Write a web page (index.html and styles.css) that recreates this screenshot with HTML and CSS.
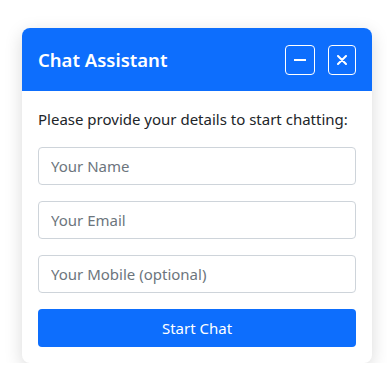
FILE: index.html
```html
<!DOCTYPE html>
<html lang="en">
<head>
    <meta charset="UTF-8">
    <meta name="viewport" content="width=device-width, initial-scale=1.0">
    <title>Chat Assistant</title>
    <link rel="stylesheet" href="styles.css">
</head>
<body>

    <div class="chat-widget">
        <div class="chat-header">
            <h2 class="chat-title">Chat Assistant</h2>
            <div class="header-buttons">
                <button class="header-btn minimize-btn" title="Minimize">
                    <svg width="12" height="12" viewBox="0 0 12 12"><path d="M0.5 6h11" stroke="#fff" stroke-width="2" stroke-linecap="round"/></svg>
                </button>
                <button class="header-btn close-btn" title="Close">
                    <svg width="10" height="10" viewBox="0 0 10 10"><path d="M1 1l8 8M9 1l-8 8" stroke="#fff" stroke-width="2" stroke-linecap="round"/></svg>
                </button>
            </div>
        </div>

        <!-- Details form shown before chat starts -->
        <div class="chat-body">
            <p class="intro">Please provide your details to start chatting:</p>
            <input type="text" class="form-input" placeholder="Your Name">
            <input type="email" class="form-input" placeholder="Your Email">
            <input type="tel" class="form-input" placeholder="Your Mobile (optional)">
            <button class="start-btn">Start Chat</button>
        </div>
    </div>

</body>
</html>
```

FILE: styles.css
```css
body {
    margin: 0;
    padding: 28px 15px 0 22px;
    font-family: "Noto Sans", "Open Sans", sans-serif;
    background-color: #fff;
}

.chat-widget {
    width: 350px;
    background-color: #fff;
    border-radius: 8px;
    box-shadow: 0 5px 18px rgba(0, 0, 0, 0.15);
    overflow: hidden;
}

.chat-header {
    display: flex;
    align-items: center;
    justify-content: space-between;
    height: 63px;
    padding: 0 16px;
    background-color: #0d6efd;
    color: #fff;
}
.chat-title {
    margin: 0;
    font-size: 18.5px;
    font-weight: 600;
}
.header-buttons {
    display: flex;
    gap: 13px;
}
.header-btn {
    display: flex;
    align-items: center;
    justify-content: center;
    width: 30px;
    height: 30px;
    padding: 0;
    background: transparent;
    border: 1px solid #fff;
    border-radius: 4px;
    cursor: pointer;
}
.close-btn {
    width: 28px;
}

.chat-body {
    display: flex;
    flex-direction: column;
    padding: 16px;
}
.intro {
    margin: 0 0 16px 0;
    font-size: 15px;
    line-height: 24px;
    color: #212529;
}
.form-input {
    box-sizing: border-box;
    width: 100%;
    height: 38px;
    margin-bottom: 16px;
    padding: 6px 12px;
    font-family: inherit;
    font-size: 15px;
    color: #212529;
    border: 1px solid #ced4da;
    border-radius: 4px;
}
.form-input::placeholder {
    color: #6c757d;
}
.start-btn {
    height: 38px;
    font-family: inherit;
    font-size: 15px;
    color: #fff;
    background-color: #0d6efd;
    border: none;
    border-radius: 4px;
    cursor: pointer;
}
```
